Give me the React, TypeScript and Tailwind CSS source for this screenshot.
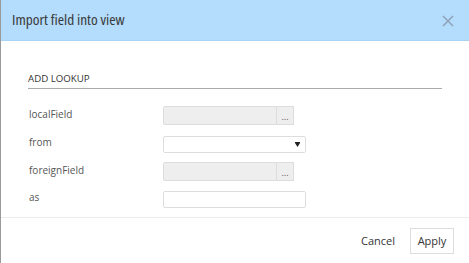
import React from "react";

export default function App() {
  const label = "w-[135px] pl-[1px] text-[10px] text-[#555] leading-none mb-[4px]";
  return (
    <div
      className="w-[469px] h-[263px] bg-white border-l border-[#9a9a9a] overflow-hidden flex flex-col"
      style={{ fontFamily: '"Open Sans", "Noto Sans", sans-serif' }}
    >
      <div className="h-[41px] shrink-0 bg-[#b3dcfd] border-b border-[#a9d3f5] flex items-center justify-between pl-[11px] pr-[15px]">
        <span className="text-[15.3px] font-stretch-condensed text-[#3a3a3a] leading-none">
          Import field into view
        </span>
        <svg width="12" height="12" viewBox="0 0 12 12" className="mt-[1px]">
          <path d="M1 1 L11 11 M11 1 L1 11" stroke="#8ea5b9" strokeWidth="1.6" />
        </svg>
      </div>
      <div className="pl-[27px] pr-[27px] pt-[31px]">
        <div className="text-[9.7px] text-[#333] leading-[14px] pb-[2px] border-b border-[#aaa]">
          ADD LOOKUP
        </div>
        <div className="flex items-center mt-[17px] h-[19px]">
          <div className={label}>localField</div>
          <div className="h-[19px] w-[114px] bg-[#eee] border border-[#ddd] rounded-l-[2px]" />
          <div className="h-[19px] w-[17px] bg-[#eee] border border-[#ddd] border-l-0 flex items-center justify-center text-[9px] text-[#555] leading-none pt-[2px]">
            ...
          </div>
        </div>
        <div className="flex items-center mt-[11px] h-[16px]">
          <div className={label}>from</div>
          <div className="h-[17px] w-[143px] bg-white border border-[#ddd] rounded-[2px] flex items-center justify-end pr-[5px]">
            <svg width="5" height="5" viewBox="0 0 5 5">
              <path d="M0 0 H5 V1 L2.5 5 L0 1 Z" fill="#222" />
            </svg>
          </div>
        </div>
        <div className="flex items-center mt-[10px] h-[19px]">
          <div className={label}>foreignField</div>
          <div className="h-[19px] w-[114px] bg-[#eee] border border-[#ddd] rounded-l-[2px]" />
          <div className="h-[19px] w-[17px] bg-[#eee] border border-[#ddd] border-l-0 flex items-center justify-center text-[9px] text-[#555] leading-none pt-[2px]">
            ...
          </div>
        </div>
        <div className="flex items-center mt-[10px] h-[16px]">
          <div className={label}>as</div>
          <div className="h-[17px] w-[143px] bg-white border border-[#ddd] rounded-[2px]" />
        </div>
      </div>
      <div className="mt-[10px] border-t border-[#ececec] flex-1 flex items-center justify-end pr-[15px] gap-[15px]">
        <button className="text-[11px] text-[#333] leading-none">Cancel</button>
        <button className="h-[26px] w-[44px] border border-[#ddd] bg-white text-[11px] text-[#333] leading-none">
          Apply
        </button>
      </div>
    </div>
  );
}
